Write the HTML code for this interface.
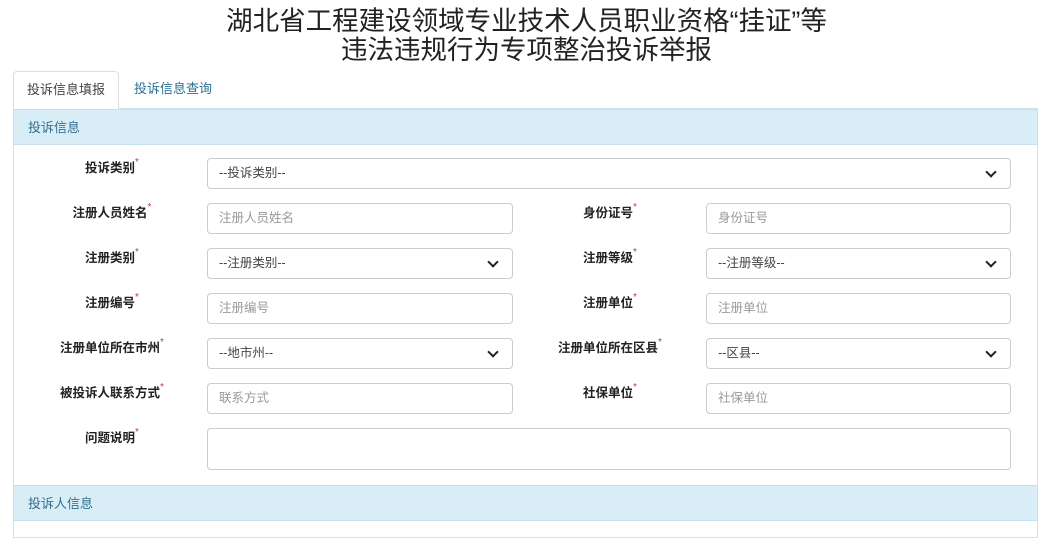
<!DOCTYPE html>
<html><head><meta charset="utf-8"><style>
*{box-sizing:border-box;margin:0;padding:0}
body{width:1053px;height:528px;background:#fff;font-family:"Liberation Sans","Noto Sans CJK SC",sans-serif;position:relative;overflow:hidden;color:#333}
.t{position:absolute;left:0;width:1053px;text-align:center;font-size:26.5px;color:#222;line-height:29px}
.tab{position:absolute;font-size:13px;line-height:36px}
.panel{position:absolute;left:13px;top:108px;width:1025px;height:430px;border:1px solid #cde3ef}
.hd{position:absolute;left:13px;width:1025px;height:36px;background:#d9edf7;border:1px solid #c6e2ee;color:#31708f;font-size:13px;line-height:36px;padding-left:14px}
.lb{position:absolute;font-size:12.5px;font-weight:bold;color:#222;text-align:center;width:200px}
.lb i{color:#a94442;font-style:normal;font-weight:normal;font-size:10px;vertical-align:top}
.in{position:absolute;height:31px;border:1px solid #ccc;border-radius:4px;font-size:12.5px;line-height:29px;padding-left:11px;color:#999;background:#fff}
.sel{color:#444}
.sel:after{content:"";position:absolute;right:15px;top:9px;width:6px;height:6px;border-right:2px solid #222;border-bottom:2px solid #222;transform:rotate(45deg)}
</style></head><body>
<div class="t" style="top:7px">湖北省工程建设领域专业技术人员职业资格“挂证”等</div>
<div class="t" style="top:36px">违法违规行为专项整治投诉举报</div>
<div class="panel"></div>
<div class="tab" style="left:13px;top:71px;width:106px;height:38px;border:1px solid #ddd;border-bottom:none;border-radius:4px 4px 0 0;background:#fff;text-align:center;color:#444;z-index:2">投诉信息填报</div>
<div class="tab" style="left:134px;top:71px;color:#2a6f97">投诉信息查询</div>
<div class="hd" style="top:109px">投诉信息</div>
<div class="hd" style="top:485px">投诉人信息</div>

<div class="lb" style="left:12px;top:157px">投诉类别<i>*</i></div>
<div class="in sel" style="left:207px;top:158px;width:804px">--投诉类别--</div>

<div class="lb" style="left:12px;top:202px">注册人员姓名<i>*</i></div>
<div class="in" style="left:207px;top:203px;width:306px">注册人员姓名</div>
<div class="lb" style="left:510px;top:202px">身份证号<i>*</i></div>
<div class="in" style="left:706px;top:203px;width:305px">身份证号</div>

<div class="lb" style="left:12px;top:247px">注册类别<i>*</i></div>
<div class="in sel" style="left:207px;top:248px;width:306px">--注册类别--</div>
<div class="lb" style="left:510px;top:247px">注册等级<i>*</i></div>
<div class="in sel" style="left:706px;top:248px;width:305px">--注册等级--</div>

<div class="lb" style="left:12px;top:292px">注册编号<i>*</i></div>
<div class="in" style="left:207px;top:293px;width:306px">注册编号</div>
<div class="lb" style="left:510px;top:292px">注册单位<i>*</i></div>
<div class="in" style="left:706px;top:293px;width:305px">注册单位</div>

<div class="lb" style="left:12px;top:337px">注册单位所在市州<i>*</i></div>
<div class="in sel" style="left:207px;top:338px;width:306px">--地市州--</div>
<div class="lb" style="left:510px;top:337px">注册单位所在区县<i>*</i></div>
<div class="in sel" style="left:706px;top:338px;width:305px">--区县--</div>

<div class="lb" style="left:12px;top:382px">被投诉人联系方式<i>*</i></div>
<div class="in" style="left:207px;top:383px;width:306px">联系方式</div>
<div class="lb" style="left:510px;top:382px">社保单位<i>*</i></div>
<div class="in" style="left:706px;top:383px;width:305px">社保单位</div>

<div class="lb" style="left:12px;top:427px">问题说明<i>*</i></div>
<div class="in" style="left:207px;top:428px;width:804px;height:42px"></div>
</body></html>
